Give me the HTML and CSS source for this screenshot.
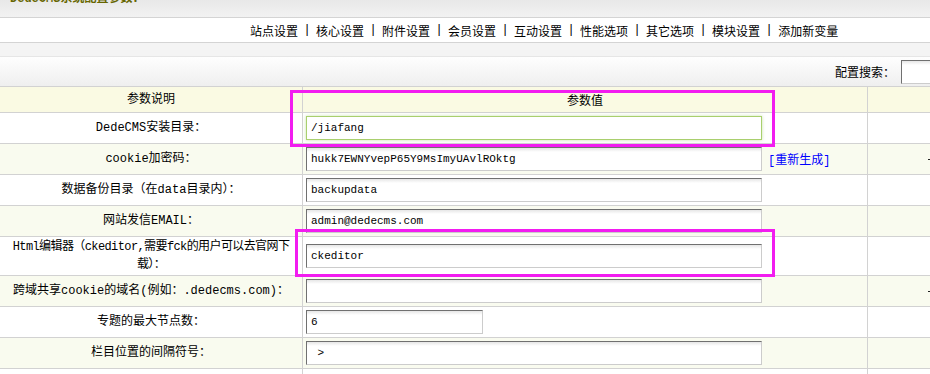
FILE: index.html
```html
<!DOCTYPE html>
<html lang="zh-CN">
<head>
  <meta charset="UTF-8" />
  <title>DedeCMS系统配置参数</title>
  <link rel="stylesheet" href="styles.css">
</head>
<body>
  <div class="page">
    <div class="title"><b>DedeCMS系统配置参数：</b></div>
    <div class="nav">
      <span>站点设置</span><span class="sep">|</span>
      <span>核心设置</span><span class="sep">|</span>
      <span>附件设置</span><span class="sep">|</span>
      <span>会员设置</span><span class="sep">|</span>
      <span>互动设置</span><span class="sep">|</span>
      <span>性能选项</span><span class="sep">|</span>
      <span>其它选项</span><span class="sep">|</span>
      <span>模块设置</span><span class="sep">|</span>
      <span>添加新变量</span>
    </div>
    <div class="band"></div>
    <div class="search">
      <label for="keywds">配置搜索：</label>
      <input type="text" id="keywds" class="txt search-box" />
    </div>

    <div class="grid">
      <div class="row head">
        <div class="cell name">参数说明</div>
        <div class="cell center">参数值</div>
        <div class="cell"></div>
      </div>
      <div class="row">
        <div class="cell name">DedeCMS安装目录：</div>
        <div class="cell value"><input type="text" class="txt focus" value="/jiafang" /></div>
        <div class="cell"></div>
      </div>
      <div class="row alt">
        <div class="cell name">cookie加密码：</div>
        <div class="cell value">
          <input type="text" class="txt" value="hukk7EWNYvepP65Y9MsImyUAvlROktg" />
          <a href="#" class="regen">[重新生成]</a>
        </div>
        <div class="cell extra"><i class="dash"></i></div>
      </div>
      <div class="row">
        <div class="cell name">数据备份目录（在data目录内）：</div>
        <div class="cell value"><input type="text" class="txt" value="backupdata" /></div>
        <div class="cell"></div>
      </div>
      <div class="row alt">
        <div class="cell name">网站发信EMAIL：</div>
        <div class="cell value"><input type="text" class="txt" value="admin@dedecms.com" /></div>
        <div class="cell"></div>
      </div>
      <div class="row tall">
        <div class="cell name nowrap">Html编辑器（ckeditor,需要fck的用户可以去官网下<br>载）：</div>
        <div class="cell value"><input type="text" class="txt" value="ckeditor" /></div>
        <div class="cell"></div>
      </div>
      <div class="row alt">
        <div class="cell name">跨域共享cookie的域名(例如：.dedecms.com)：</div>
        <div class="cell value"><input type="text" class="txt" value="" /></div>
        <div class="cell extra"><i class="dash"></i></div>
      </div>
      <div class="row">
        <div class="cell name">专题的最大节点数：</div>
        <div class="cell value"><input type="text" class="txt short" value="6" /></div>
        <div class="cell"></div>
      </div>
      <div class="row alt">
        <div class="cell name">栏目位置的间隔符号：</div>
        <div class="cell value"><input type="text" class="txt" value=" >" /></div>
        <div class="cell"></div>
      </div>
      <div class="row">
        <div class="cell name"></div>
        <div class="cell value"></div>
        <div class="cell"></div>
      </div>
    </div>

    <!-- highlight boxes drawn over the screenshot -->
    <div class="mark mark-top"></div>
    <div class="mark mark-editor"></div>
  </div>
</body>
</html>
```

FILE: styles.css
```css
* {
  box-sizing: border-box;
}
html, body {
  margin: 0;
  overflow: hidden;
}
body {
  background: #fff;
  color: #000;
  font-family: "Liberation Mono", "Noto Sans CJK SC", monospace;
  font-size: 12px;
}
.page {
  position: relative;
  width: 1040px;
}
.title {
  height: 18px;
  padding-left: 10px;
  overflow: hidden;
  background: linear-gradient(#e8e8e8, #f2f2f2);
  border-bottom: 1px solid #d4d4d4;
}
.title b {
  display: block;
  margin-top: -9px;
  line-height: 17px;
  color: #666600;
}
.nav {
  height: 25px;
  padding-left: 250px;
  display: flex;
  align-items: center;
  font-family: "Noto Sans CJK SC", sans-serif;
  border-bottom: 1px solid #d4d4d4;
}
.nav .sep {
  width: 18px;
  text-align: center;
  font-family: "Liberation Mono", monospace;
}
.band {
  height: 14px;
  background: #f4f4f4;
  border-bottom: 1px solid #e6e6e6;
}
.search {
  height: 29px;
  padding-left: 835px;
  display: flex;
  align-items: center;
  background: linear-gradient(#fefefe, #efefef);
}
.search label {
  flex-shrink: 0;
  white-space: nowrap;
  font-family: "Noto Sans CJK SC", sans-serif;
}
.txt.search-box {
  flex-shrink: 0;
  margin-left: 6px;
  width: 120px;
}
.grid {
  border-top: 1px solid #d2d2d2;
}
.row {
  display: grid;
  grid-template-columns: 302px 565px 1fr;
  height: 31px;
  border-bottom: 1px solid #d2d2d2;
}
.row.head {
  height: 26px;
  background: #fafae3;
}
.row.alt {
  background: #f9fbef;
}
.row.tall {
  height: 39px;
}
.cell + .cell {
  border-left: 1px solid #d2d2d2;
}
.cell {
  display: flex;
  align-items: center;
}
.name,
.center {
  justify-content: center;
  text-align: center;
  line-height: 18px;
}
.nowrap {
  white-space: nowrap;
  letter-spacing: -0.6px;
}
.center {
  font-family: "Noto Sans CJK SC", sans-serif;
}
.value {
  padding-left: 3px;
}
.txt {
  width: 456px;
  height: 24px;
  margin: 0;
  padding: 0 4px;
  border: 1px solid;
  border-color: #707070 #cccccc #cccccc #707070;
  background: linear-gradient(#e6e6e6, #fff 4px);
  font-family: "Liberation Mono", monospace;
  font-size: 11px;
  color: #000;
  outline: none;
}
.txt.short {
  width: 177px;
}
.txt.focus {
  border-color: #a9cf6e;
  background: #fff;
  box-shadow: 0 0 3px rgba(150, 200, 90, 0.5);
}
.regen {
  margin-left: 6px;
  color: #0000ff;
  text-decoration: none;
}
.extra {
  padding-left: 60px;
}
.dash {
  width: 4px;
  height: 1px;
  background: #222;
}
.mark {
  position: absolute;
  border: 3px solid #f21cf0;
}
.mark-top {
  left: 290px;
  top: 90px;
  width: 485px;
  height: 57px;
}
.mark-editor {
  left: 295px;
  top: 229px;
  width: 480px;
  height: 48px;
}
```
